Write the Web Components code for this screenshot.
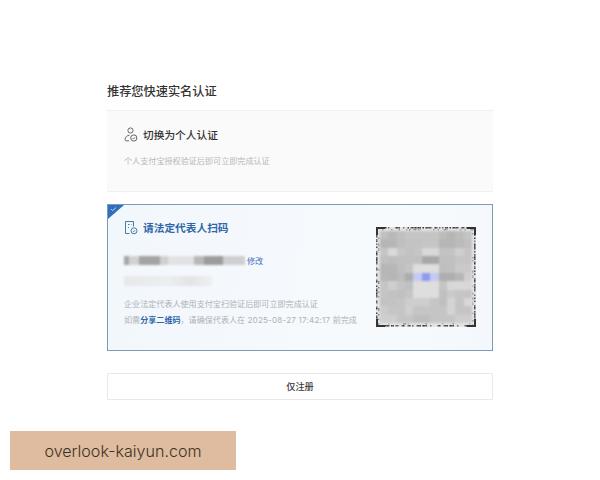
<!DOCTYPE html>
<html lang="zh">
<head>
<meta charset="utf-8">
<title>实名认证</title>
<style>
  html, body { margin: 0; background: #fff; }
  body { font-family: "Inter", "Noto Sans CJK SC", sans-serif; width: 600px; height: 480px; overflow: hidden; position: relative; }
</style>
</head>
<body>
<auth-page>
  <option-card slot="cards">
    <user-icon slot="icon"></user-icon>
    <span slot="title">切换为个人认证</span>
    <span>个人支付宝授权验证后即可立即完成认证</span>
  </option-card>
  <scan-card slot="cards"></scan-card>
</auth-page>
<water-mark>overlook-kaiyun.com</water-mark>

<script>
class AuthPage extends HTMLElement {
  constructor() {
    super();
    this.attachShadow({ mode: 'open' });
    this.shadowRoot.innerHTML = `
      <style>
        :host { display: block; padding: 82px 107px 0; }
        h1 { margin: 0 0 8px; font-size: 12.2px; line-height: 20px; font-weight: 500; color: #333; }
        .cards { display: flex; flex-direction: column; gap: 12px; }
        button {
          display: block; box-sizing: border-box; width: 100%; height: 27px; margin-top: 22px;
          background: #fff; border: 1px solid #e8e8e8; border-radius: 1px; padding: 0 0 2px;
          font: 500 9.2px "Inter", "Noto Sans CJK SC", sans-serif; color: #3a3a3a;
        }
      </style>
      <h1>推荐您快速实名认证</h1>
      <div class="cards"><slot name="cards"></slot></div>
      <button>仅注册</button>`;
  }
}

class OptionCard extends HTMLElement {
  constructor() {
    super();
    this.attachShadow({ mode: 'open' });
    this.shadowRoot.innerHTML = `
      <style>
        :host {
          display: block; box-sizing: border-box; height: 82px; padding: 16px 17px 0;
          background: #fafafa; border: solid #f0f0f0; border-width: 1px 0 1px 0;
        }
        .head { display: flex; align-items: center; gap: 5px; height: 15px; font-size: 10.7px; font-weight: 500; color: #333; }
        .sub { margin-top: 13px; font-size: 8.1px; line-height: 12px; color: #b8b8b8; }
      </style>
      <div class="head"><slot name="icon"></slot><slot name="title"></slot></div>
      <div class="sub"><slot></slot></div>`;
  }
}

class UserIcon extends HTMLElement {
  constructor() {
    super();
    this.attachShadow({ mode: 'open' });
    this.shadowRoot.innerHTML = `
      <style>:host { display: block; width: 14px; height: 15px; } svg { display: block; }</style>
      <svg width="14" height="15" viewBox="0 0 14 15" fill="none" stroke="#666" stroke-width="1">
        <circle cx="6.5" cy="3.5" r="2.6"/>
        <path d="M5.5 8.2C3.2 8.4 1.2 9.8 1.1 12.6c0 .8.4 1.2 1.1 1.2H5"/>
        <circle cx="9.8" cy="11" r="3.1"/>
        <path d="M8.5 11l1 1 1.5-1.6" stroke-width=".9"/>
      </svg>`;
  }
}

class ScanIcon extends HTMLElement {
  constructor() {
    super();
    this.attachShadow({ mode: 'open' });
    this.shadowRoot.innerHTML = `
      <style>:host { display: block; width: 14px; height: 15px; } svg { display: block; }</style>
      <svg width="14" height="15" viewBox="0 0 14 15" fill="none" stroke="#4a7aa8" stroke-width="1">
        <path d="M5.5 13.5H1.5V1.5h8v5"/>
        <path d="M4 4.5h1.5M7 4.5h.5M4 7.5h1"/>
        <circle cx="10" cy="10.8" r="3"/>
        <path d="M8.8 10.8l.9 1 1.5-1.6" stroke-width=".9"/>
      </svg>`;
  }
}

class BlurBar extends HTMLElement {
  constructor() {
    super();
    this.attachShadow({ mode: 'open' });
    this.shadowRoot.innerHTML = `
      <style>
        :host { display: block; width: var(--w); height: var(--h); background: var(--bg); filter: blur(1px); }
      </style>`;
  }
}

// mosaic values read off the reference, light grey squares with the blue centre
const QR_CELLS = [
  [193,185,192,197,197,197,197,188,181,188,196],
  [182,182,191,195,195,197,197,182,182,187,192],
  [197,218,199,194,197,216,216,195,195,207,197],
  [192,190,193,193,193,168,168,192,192,197,197],
  [182,182,191,197,222,222,222,191,192,202,202],
  [184,182,188,172,162,132,216,174,174,182,207],
  [197,207,196,192,222,222,222,197,216,216,216],
  [197,194,192,197,222,222,222,192,202,197,197],
  [195,195,197,205,206,206,197,192,212,197,216],
  [204,197,197,207,197,197,197,197,212,197,197],
  [206,206,197,197,190,190,197,197,197,206,206]
];

class QrCode extends HTMLElement {
  constructor() {
    super();
    this.attachShadow({ mode: 'open' });
    let cells = '';
    QR_CELLS.forEach((row, y) => row.forEach((v, x) => {
      let color = `rgb(${v},${v},${v})`;
      if (v === 132) color = '#8f9bf0';
      if (y === 5 && (x === 4 || x === 6)) color = '#c3cbf2';
      cells += `<i style="background:${color}"></i>`;
    }));
    // speckled edge of the code, same dots every run
    let dots = '';
    let seed = 7;
    const next = () => (seed = (seed * 137 + 59) % 256);
    for (let i = 0; i < 100; i += 1.5) {
      [[i, 0], [i, 98], [0, i], [98, i], [i, 2], [i, 96], [2, i], [96, i]].forEach(([x, y], k) => {
        const outer = k < 4;
        if (next() % 3 === 0 || (!outer && next() % 2)) return;
        const shade = outer ? 50 + next() % 70 : 120 + next() % 70;
        dots += `<rect x="${x}" y="${y}" width="1.5" height="1.5" fill="rgb(${shade},${shade},${shade})"/>`;
      });
    }
    this.shadowRoot.innerHTML = `
      <style>
        :host { display: block; width: 100px; height: 100px; padding: 4px; box-sizing: border-box; background: #e4e4e4; position: relative; }
        svg { position: absolute; left: 0; top: 0; filter: blur(.35px); }
        .grid {
          display: grid; grid-template-columns: repeat(11, 1fr); grid-template-rows: repeat(11, 1fr);
          width: 100%; height: 100%; background: #ccc; filter: blur(.8px);
        }
      </style>
      <svg width="100" height="100" viewBox="0 0 100 100">
        ${dots}
        <path d="M1 8V1h8M91 1h8v7M1 92v7h8M91 99h8v-7" fill="none" stroke="#333" stroke-width="2"/>
      </svg>
      <div class="grid">${cells}</div>`;
  }
}

class ScanCard extends HTMLElement {
  constructor() {
    super();
    this.attachShadow({ mode: 'open' });
    this.shadowRoot.innerHTML = `
      <style>
        :host {
          display: flex; box-sizing: border-box; height: 147px; position: relative;
          padding: 15px 16px 0 16px; justify-content: space-between;
          background: linear-gradient(100deg, #f2f7fc, #f7fafd 70%, #f4f8fc);
          border: 1px solid #7d9ab8;
        }
        .flag { position: absolute; left: 0; top: 0; }
        .head { display: flex; align-items: center; gap: 5px; height: 15px; font-size: 10.7px; font-weight: 700; color: #2f67a8; }
        .row { display: flex; align-items: center; gap: 2px; margin-top: 19px; height: 12px; }
        .edit { font-size: 8.1px; color: #4a72b4; }
        .bar2 { margin-top: 10px; }
        p { margin: 0; font-size: 8.08px; line-height: 12px; color: #aeb2b7; white-space: nowrap; }
        .first { margin-top: 12px; }
        .second { margin-top: 4px; }
        b { font-weight: 700; color: #2f67a8; }
        .date { letter-spacing: .2px; }
        qr-code { margin: 7px 0 0; }
      </style>
      <svg class="flag" width="16" height="14" viewBox="0 0 16 14">
        <path d="M0 0H16L0 14Z" fill="#2f6fbe"/>
        <path d="M3 4l1.6 1.6L8 2.6" fill="none" stroke="#fff" stroke-width=".7"/>
      </svg>
      <div class="main">
        <div class="head"><scan-icon></scan-icon><span>请法定代表人扫码</span></div>
        <div class="row">
          <blur-bar style="--w:121px;--h:9px;--bg:linear-gradient(90deg,#a6a6a6 0 4%,#d2d2d2 4% 12%,#a4a4a4 12% 30%,#d0d0d0 30% 36%,#e2e2e4 36% 58%,#b8b8b8 58% 66%,#9c9c9c 66% 82%,#cfcfd2 82%)"></blur-bar>
          <span class="edit">修改</span>
        </div>
        <blur-bar class="bar2" style="--w:88px;--h:10px;--bg:linear-gradient(90deg,#e6e8ea,#eceef0 50%,#e2e4e6 75%,#eef0f2)"></blur-bar>
        <p class="first">企业法定代表人使用支付宝扫验证后即可立即完成认证</p>
        <p class="second">如需<b>分享二维码</b>，请确保代表人在 <span class="date">2025-08-27 17:42:17</span> 前完成</p>
      </div>
      <qr-code></qr-code>`;
  }
}

class WaterMark extends HTMLElement {
  constructor() {
    super();
    this.attachShadow({ mode: 'open' });
    this.shadowRoot.innerHTML = `
      <style>
        :host {
          position: absolute; left: 10px; top: 431px; width: 226px; height: 39px;
          display: flex; align-items: center; justify-content: center;
          background: #dfbba0; color: #3c3224; font: 300 16.1px "Inter", sans-serif;
        }
      </style>
      <slot></slot>`;
  }
}

customElements.define('auth-page', AuthPage);
customElements.define('option-card', OptionCard);
customElements.define('user-icon', UserIcon);
customElements.define('scan-icon', ScanIcon);
customElements.define('blur-bar', BlurBar);
customElements.define('qr-code', QrCode);
customElements.define('scan-card', ScanCard);
customElements.define('water-mark', WaterMark);
</script>
</body>
</html>
